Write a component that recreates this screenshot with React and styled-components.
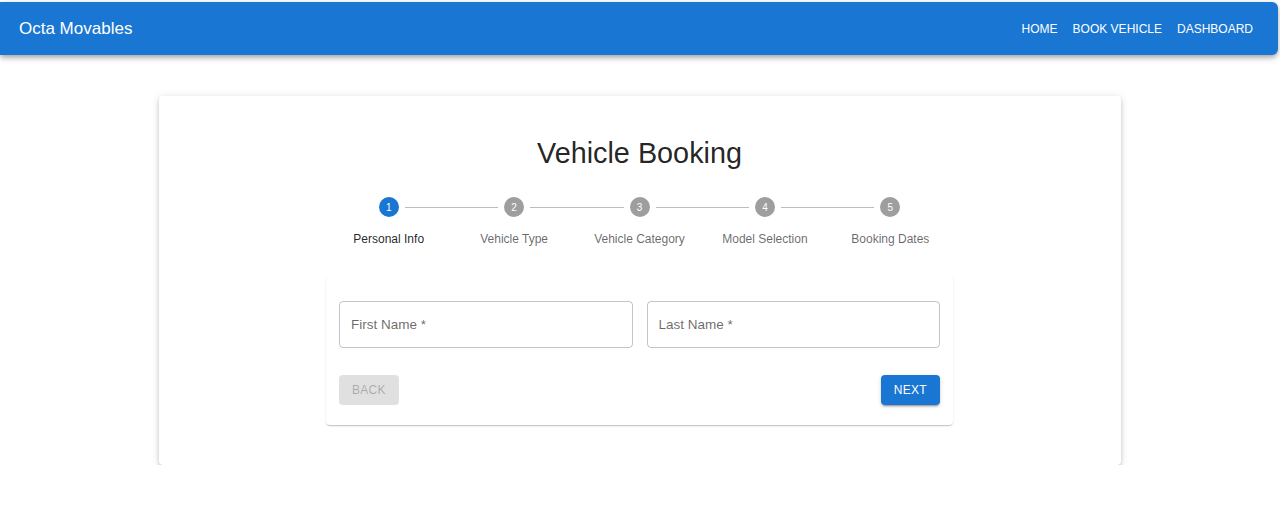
import React from "react";
import styled, { createGlobalStyle } from "styled-components";

const Global = createGlobalStyle`
  html, body { margin: 0; padding: 0; background: #fff; }
  body { font-family: "Liberation Sans", Arial, sans-serif; }
  * { box-sizing: border-box; }
`;

const AppBar = styled.header`
  margin: 2px 2px 0 0;
  height: 53px;
  background: #1976d2;
  color: #fff;
  border-radius: 0 6px 6px 0;
  display: flex;
  align-items: center;
  justify-content: space-between;
  padding: 0 19px 0 19px;
  box-shadow: 0 2px 4px -1px rgba(0,0,0,0.2), 0 4px 5px 0 rgba(0,0,0,0.14), 0 1px 10px 0 rgba(0,0,0,0.12);
`;

const Brand = styled.div`
  font-size: 17px;
  line-height: 20px;
  font-weight: 400;
`;

const Nav = styled.nav`
  display: flex;
  gap: 2px;
`;

const NavButton = styled.a`
  font-size: 12px;
  font-weight: 500;
  text-transform: uppercase;
  padding: 5px 6px 5px 7px;
  color: #fff;
`;

const Main = styled.main`
  padding-top: 41px;
  display: flex;
  justify-content: center;
`;

const Card = styled.section`
  width: 962px;
  background: #fff;
  border-radius: 4px;
  padding: 40px 168px 40px 167px;
  box-shadow: 0 3px 3px -2px rgba(0,0,0,0.2), 0 3px 4px 0 rgba(0,0,0,0.14), 0 1px 8px 0 rgba(0,0,0,0.12);
`;

const Content = styled.div`
  width: 627px;
`;

const Title = styled.h1`
  margin: 0;
  text-align: center;
  font-size: 28.8px;
  line-height: 34px;
  font-weight: 400;
  color: rgba(0,0,0,0.87);
`;

const Stepper = styled.ol`
  list-style: none;
  margin: 27px 0 0;
  padding: 0;
  display: flex;
`;

const Step = styled.li`
  flex: 1;
  position: relative;
  display: flex;
  flex-direction: column;
  align-items: center;
`;

const Connector = styled.span`
  position: absolute;
  top: 10px;
  left: calc(-50% + 16px);
  right: calc(50% + 16px);
  border-top: 1px solid #bdbdbd;
`;

const Circle = styled.span`
  width: 20px;
  height: 20px;
  border-radius: 50%;
  background: ${p => (p.$active ? "#1976d2" : "#9e9e9e")};
  color: #fff;
  font-size: 10px;
  display: flex;
  align-items: center;
  justify-content: center;
`;

const StepLabel = styled.span`
  margin-top: 14px;
  font-size: 12px;
  line-height: 16px;
  color: ${p => (p.$active ? "rgba(0,0,0,0.87)" : "rgba(0,0,0,0.6)")};
`;

const FormPaper = styled.div`
  margin-top: 29px;
  background: #fff;
  border-radius: 4px;
  padding: 25px 13px 20px;
  box-shadow: 0 2px 1px -1px rgba(0,0,0,0.12), 0 1px 1px 0 rgba(0,0,0,0.08), 0 1px 3px 0 rgba(0,0,0,0.08);
`;

const FieldRow = styled.div`
  display: grid;
  grid-template-columns: 1fr 1fr;
  gap: 14px;
`;

const Field = styled.div`
  height: 47px;
  border: 1px solid rgba(0,0,0,0.23);
  border-radius: 4px;
  display: flex;
  align-items: center;
  padding: 0 11px;
  font-size: 13.5px;
  color: rgba(0,0,0,0.6);
`;

const Actions = styled.div`
  margin-top: 27px;
  display: flex;
  justify-content: space-between;
`;

const Button = styled.button`
  height: 30px;
  min-width: 59px;
  padding: 0 13px;
  border: 0;
  border-radius: 4px;
  font-family: inherit;
  font-size: 12px;
  font-weight: 500;
  letter-spacing: 0.3px;
  text-transform: uppercase;
  background: ${p => (p.$primary ? "#1976d2" : "rgba(0,0,0,0.12)")};
  color: ${p => (p.$primary ? "#fff" : "rgba(0,0,0,0.26)")};
  box-shadow: ${p => (p.$primary ? "0 3px 1px -2px rgba(0,0,0,0.2), 0 2px 2px 0 rgba(0,0,0,0.14), 0 1px 5px 0 rgba(0,0,0,0.12)" : "none")};
`;

const steps = ["Personal Info", "Vehicle Type", "Vehicle Category", "Model Selection", "Booking Dates"];

export default function App() {
  return (
    <>
      <Global />
      <AppBar>
        <Brand>Octa Movables</Brand>
        <Nav>
          <NavButton>Home</NavButton>
          <NavButton>Book Vehicle</NavButton>
          <NavButton>Dashboard</NavButton>
        </Nav>
      </AppBar>
      <Main>
        <Card>
          <Content>
            <Title>Vehicle Booking</Title>
            <Stepper>
              {steps.map((s, i) => (
                <Step key={s}>
                  {i > 0 && <Connector />}
                  <Circle $active={i === 0}>{i + 1}</Circle>
                  <StepLabel $active={i === 0}>{s}</StepLabel>
                </Step>
              ))}
            </Stepper>
            <FormPaper>
              <FieldRow>
                <Field>First Name *</Field>
                <Field>Last Name *</Field>
              </FieldRow>
              <Actions>
                <Button disabled>Back</Button>
                <Button $primary>Next</Button>
              </Actions>
            </FormPaper>
          </Content>
        </Card>
      </Main>
    </>
  );
}
